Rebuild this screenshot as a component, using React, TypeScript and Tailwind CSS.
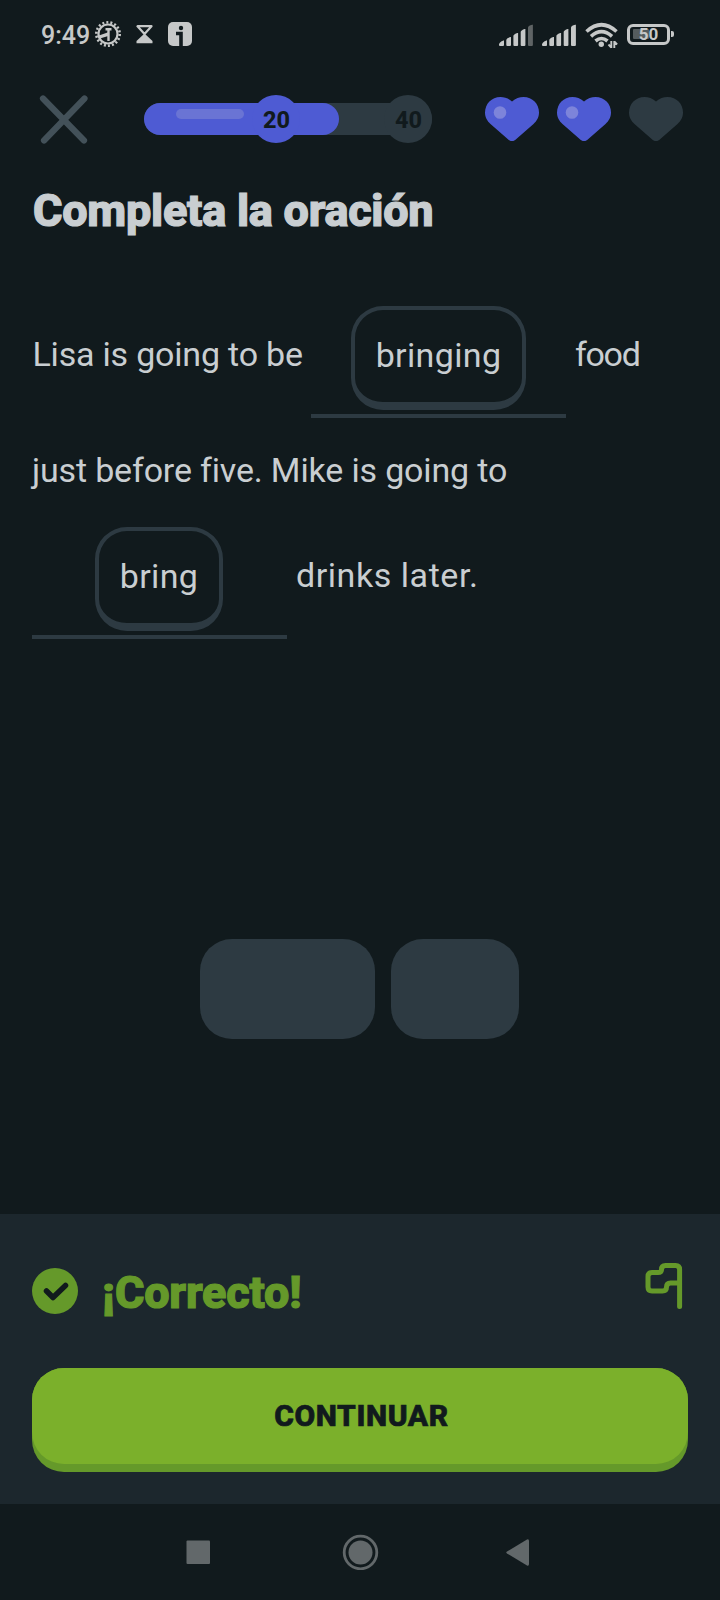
import React from "react";

function SignalBars({ weak = false }: { weak?: boolean }) {
  return (
    <svg width="35" height="24" viewBox="0 0 35 24" fill="#c6c8c8">
      <path d="M0 21.5c0-1.5 3-4 5-4V22q0 1-1 1H1q-1 0-1-1Z" />
      <path d="M7.3 17c0-1.5 3-3 4.700-3v8q0 1-1 1H8.300q-1 0-1-1Z" />
      <path d="M14.400 13c0-1.5 3-3 4.700-3v12q0 1-1 1h-2.700q-1 0-1-1Z" />
      <path d="M21.700 9c0-1.5 3-3 4.700-3v16q0 1-1 1h-2.700q-1 0-1-1Z" />
      <path d="M29 4.500c0-1.5 3-2.800 4.900-2.800V22q0 1-1 1H30q-1 0-1-1Z" fill={weak ? "#5f6465" : "#c6c8c8"} />
    </svg>
  );
}

function Heart({ full = false }: { full?: boolean }) {
  return (
    <svg width="54" height="44" viewBox="0 0 54 44">
      <path
        d="M27 4.5C23.5 1.3 19.5 0 15.5 0C6.5 0 0 7 0 15.5C0 20.5 2.3 24 5.5 27L23.8 43Q27 45.4 30.2 43L48.5 27C51.7 24 54 20.5 54 15.5C54 7 47.5 0 38.5 0C34.5 0 30.5 1.3 27 4.5Z"
        fill={full ? "#4e5bd3" : "#2d3a42"}
      />
      {full && <circle cx="15" cy="15.5" r="6.3" fill="#7d84da" />}
    </svg>
  );
}

function StatusBar() {
  return (
    <header className="flex h-[72px] shrink-0 items-start pr-[50px] pl-[41px] pt-[20px]">
      <span className="w-[54px] text-[25px] leading-[31px] font-medium whitespace-nowrap text-[#c6c8c8]">9:49</span>
      <svg width="27" height="28" viewBox="0 0 27 28" fill="none">
        <circle cx="13" cy="14" r="11.7" stroke="#c6c8c8" strokeWidth="2.6" strokeDasharray="2 2.083" />
        <circle cx="13" cy="14" r="9.5" stroke="#c6c8c8" strokeWidth="2.2" />
        <path d="M10.5 9.200h6M13.500 9v12" stroke="#c6c8c8" strokeWidth="2.4" />
        <path d="M2.500 16 14 12v3.800L5 18.500Z" fill="#c6c8c8" />
      </svg>
      <svg className="mt-[5px] ml-[13.5px]" width="17" height="19" viewBox="0 0 17 19">
        <path d="M1.500 1.200h14L8.500 9Z" fill="none" stroke="#c6c8c8" strokeWidth="2.200" strokeLinejoin="round" />
        <path d="M8.500 8.500 16.500 16v2.300H.5V16Z" fill="#c6c8c8" />
      </svg>
      <svg className="mt-[2px] ml-[15px]" width="24" height="24" viewBox="0 0 24 24">
        <rect width="24" height="24" rx="5" fill="#c6c8c8" />
        <circle cx="13" cy="6" r="2.2" fill="#111a1d" />
        <path d="M8 11.500h5V24" fill="none" stroke="#111a1d" strokeWidth="3.6" />
      </svg>
      <div className="ml-auto flex items-start">
        <div className="mt-[3px] flex gap-[8px]">
          <SignalBars weak />
          <SignalBars />
        </div>
        <svg className="mt-[2px] ml-[8px]" width="34" height="27" viewBox="0 0 34 27" fill="none" stroke="#c6c8c8" strokeWidth="3.6">
          <path d="M1.500 9.500Q16.500-4 31.500 9.500" />
          <path d="M6 14.300Q16.500 5 27 14.300" />
          <path d="M10.500 19Q16.500 14 22.500 19" />
          <circle cx="16.300" cy="22.300" r="2.700" fill="#c6c8c8" stroke="none" />
          <path d="M26.300 19v7M29.300 19v7M23.500 22.500l2.800 3M29.300 19.500l2.800 3" strokeWidth="1.9" />
        </svg>
        <div className="relative mt-[4px] ml-[8px] h-[21px] w-[43px] rounded-[6px] border-[3px] border-[#c6c8c8]">
          <div className="ml-[3px] mt-[2px] h-[10px] w-[16px] rounded-[1px] bg-[#555c5e]" />
          <span className="absolute inset-0 text-center text-[17px] leading-[15px] font-bold text-[#c6c8c8]">50</span>
          <span className="absolute top-[4px] -right-[7px] h-[6px] w-[3px] rounded-r-[2px] bg-[#c6c8c8]" />
        </div>
      </div>
    </header>
  );
}

function LessonHeader() {
  return (
    <div className="flex h-[94px] shrink-0 items-center pl-[39px]">
      <svg width="50" height="50" viewBox="0 0 50 50" fill="none" stroke="#435159" strokeWidth="6.200" strokeLinecap="round">
        <path d="M4 4.500 45 46.500M45.500 4.500 5 46.500" />
      </svg>
      <div className="relative ml-[55px] h-[32px] w-[288px] rounded-full bg-[#2d3a42]">
        <div className="h-[32px] w-[195px] rounded-full bg-[#4e5bd3] pt-[6px] pl-[32px]">
          <div className="h-[10px] w-[68px] rounded-full bg-[#6a74d4]" />
        </div>
        <span className="absolute -top-[8px] left-[108px] h-[48px] w-[48px] rounded-full bg-[#4e5bd3] pl-[1px] text-center text-[23.5px] leading-[50px] font-extrabold text-[#111a1d]">20</span>
        <span className="absolute -top-[8px] left-[240px] h-[48px] w-[48px] rounded-full bg-[#2d3a42] pl-[1px] text-center text-[23.5px] leading-[50px] font-extrabold text-[#111a1d]">40</span>
      </div>
      <div className="ml-[53px] flex gap-[18px]">
        <Heart full />
        <Heart full />
        <Heart />
      </div>
    </div>
  );
}

function Blank({ word, className }: { word: string; className: string }) {
  return (
    <div className="h-[112px] w-[255px] border-b-4 border-[#2d3a42]">
      <div className={"h-[104px] rounded-[32px] border-4 border-b-8 border-[#2d3a42] text-center leading-[91px] tracking-[0.35px] whitespace-nowrap " + className}>{word}</div>
    </div>
  );
}

export default function App() {
  return (
    <div className="flex h-[1600px] w-[720px] flex-col overflow-hidden bg-[#111a1d] font-[Roboto,sans-serif] text-[#c9ced1]">
      <StatusBar />
      <LessonHeader />
      <main className="flex flex-1 flex-col pt-[19px]">
        <h1 className="pl-[33px] text-[45px] leading-[52px] font-extrabold tracking-[-0.25px] whitespace-nowrap [-webkit-text-stroke:1.2px_#c9ced1]">Completa la oración</h1>
        <section className="mt-[69px] pl-[32px] text-[34px]">
          <div className="flex items-start">
            <span className="w-[279px] pl-[0.5px] leading-[96px] tracking-[-0.2px] whitespace-nowrap">Lisa is going to be</span>
            <Blank word="bringing" className="ml-[40px] w-[175px]" />
            <span className="ml-[9px] leading-[96px] tracking-[-1.3px]">food</span>
          </div>
          <div className="mt-[28px] h-[48px] leading-[48px] tracking-[-0.16px] whitespace-nowrap">just before five. Mike is going to</div>
          <div className="mt-[33px] flex items-start">
            <Blank word="bring" className="ml-[63px] w-[128px]" />
            <span className="ml-[9px] leading-[96px] tracking-[0.55px] whitespace-nowrap">drinks later.</span>
          </div>
        </section>
        <div className="mt-[300px] flex gap-[16px] pl-[200px]">
          <div className="h-[100px] w-[175px] rounded-[32px] bg-[#2d3a42]" />
          <div className="h-[100px] w-[128px] rounded-[32px] bg-[#2d3a42]" />
        </div>
      </main>
      <footer className="h-[290px] shrink-0 bg-[#1c272d] px-[32px] pt-[49px]">
        <div className="flex h-[105px] items-start text-[#65992a]">
          <svg className="mt-[5px]" width="46" height="46" viewBox="0 0 46 46" fill="none">
            <circle cx="23" cy="23" r="23" fill="#65992a" />
            <path d="m14.500 23 6.500 6.500L33.500 17.500" stroke="#111a1d" strokeWidth="5.5" strokeLinecap="round" strokeLinejoin="round" />
          </svg>
          <strong className="ml-[24px] text-[45px] leading-[60px] font-extrabold tracking-[-0.2px] whitespace-nowrap [-webkit-text-stroke:1.2px_#65992a]">¡Correcto!</strong>
          <svg className="mr-[5px] ml-auto" width="38" height="47" viewBox="0 0 38 47" fill="none" stroke="#65992a" strokeWidth="5" strokeLinecap="round" strokeLinejoin="round">
            <path d="M34.600 43.500V6.500q0-4-4-4H20.500q-4 0-4 4q0 3-3.500 3H7q-4 0-4 4V24q0 4 4 4h10.500q4 0 4-4q0-4 4-4h9" />
          </svg>
        </div>
        <button className="block h-[104px] w-[656px] rounded-[32px] bg-[#65992a] pb-[8px]">
          <span className="block h-[96px] rounded-[32px] bg-[#7bb02b] pl-[3px] text-center text-[30px] leading-[96px] font-extrabold tracking-[0.6px] text-[#111a1d] [-webkit-text-stroke:0.7px_#111a1d]">CONTINUAR</span>
        </button>
      </footer>
      <nav className="flex h-[96px] shrink-0 items-center pl-[186px]">
        <svg width="344" height="36" viewBox="0 0 344 36" fill="#62686a">
          <rect x=".5" y="6.5" width="23.5" height="23.5" rx="1" />
          <circle cx="174.5" cy="18.5" r="12" />
          <circle cx="174.5" cy="18.5" r="16.3" fill="none" stroke="#62686a" strokeWidth="2.8" />
          <path d="M321 17.500 341 5.500q2-.8 2 1.500v23q0 2.300-2 1.500L321 19.500q-1.500-1 0-2Z" />
        </svg>
      </nav>
    </div>
  );
}
